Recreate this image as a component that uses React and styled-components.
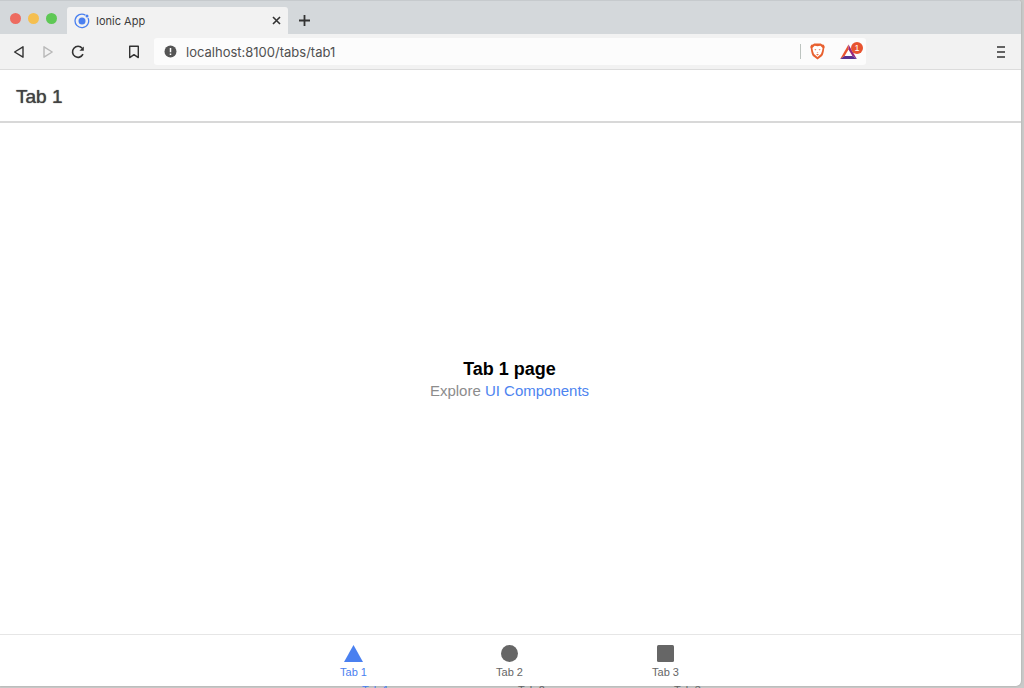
import React, { useState } from "react";
import styled, { createGlobalStyle } from "styled-components";

const GlobalStyle = createGlobalStyle`
    * {
        box-sizing: border-box;
    }
    html, body, #root {
        height: 100%;
        margin: 0;
    }
    body {
        background: #c9cac9;
        font-family: "Liberation Sans", Arial, sans-serif;
        overflow: hidden;
    }
    button {
        padding: 0;
        border: none;
        background: none;
        font: inherit;
        color: inherit;
    }
    svg {
        display: block;
    }
`;

/* browser window */
const DesktopStyled = styled.div`
    display: flex;
    flex-direction: column;
    height: 100%;
    padding-right: 3px;
`;

const WindowStyled = styled.div`
    flex: 1;
    min-height: 0;
    display: flex;
    flex-direction: column;
    overflow: hidden;
    background: #fff;
    border-radius: 0 4px 5px 0;
    box-shadow: 0 0 2px #999;
`;

/* the edge of the window behind, its tab labels just peek out */
const RearEdgeStyled = styled.div`
    display: flex;
    justify-content: center;
    height: 2px;
    padding-left: 42px;
    overflow: hidden;
    font-size: 11px;
    line-height: 8px;
    text-align: center;
    color: #666;
    span {
        width: 156px;
    }
    span:first-child {
        color: #4a80f0;
    }
`;

const TabStripStyled = styled.div`
    display: flex;
    align-items: flex-end;
    height: 34px;
    padding-left: 10px;
    background: #d4d8db;
    border-top: 1px solid #c6cacd;
    font-family: Inter, "Liberation Sans", sans-serif;
`;

const LightsStyled = styled.div`
    display: flex;
    align-self: center;
    gap: 7px;
    width: 57px;
    padding-top: 1px;
`;

const LightStyled = styled.button`
    width: 11px;
    height: 11px;
    border-radius: 50%;
    background: ${props => props.$color};
`;

const PageTabStyled = styled.div`
    display: flex;
    align-items: center;
    gap: 6px;
    width: 221px;
    height: 27px;
    padding: 0 7px;
    background: #f2f2f2;
    border-radius: 3px 3px 0 0;
    font-size: 11px;
    color: #3c3c3c;
    .name {
        flex: 1;
    }
`;

const NewTabStyled = styled.button`
    display: flex;
    align-items: center;
    height: 27px;
    margin-left: 10px;
    color: #333;
`;

const AddressRowStyled = styled.div`
    display: flex;
    align-items: center;
    height: 36px;
    padding: 0 14px 0 12px;
    background: #f2f2f2;
    border-bottom: 1px solid #dcdcdc;
    color: #333;
`;

const NavStyled = styled.div`
    display: flex;
    align-items: center;
    gap: 15px;
    .bookmark {
        margin-left: 27px;
    }
`;

const AddressStyled = styled.div`
    flex: 1;
    display: flex;
    align-items: center;
    max-width: 712px;
    height: 27px;
    margin-left: 14px;
    padding: 0 3px 0 10px;
    background: #fcfcfc;
    border-radius: 3px;
`;

const UrlStyled = styled.input`
    flex: 1;
    min-width: 0;
    margin-left: 9px;
    padding: 0;
    border: none;
    outline: none;
    background: none;
    font-family: Inter, "Liberation Sans", sans-serif;
    font-size: 13px;
    color: #505050;
`;

const ShieldsStyled = styled.div`
    display: flex;
    align-items: center;
    gap: 15px;
    height: 15px;
    padding-left: 9px;
    border-left: 1px solid #bdc4c0;
`;

const MenuStyled = styled.button`
    margin-left: auto;
`;

/* ionic page */
const HeaderStyled = styled.header`
    display: flex;
    align-items: center;
    height: 53px;
    padding: 2px 16px 0;
    border-bottom: 2px solid #d8d8d8;
    h1 {
        margin: 0;
        font-size: 19px;
        font-weight: 400;
        color: #424242;
        text-shadow: 0 0 1px #424242;
    }
`;

const ContentStyled = styled.main`
    flex: 1;
    display: flex;
    flex-direction: column;
    align-items: center;
    justify-content: center;
    padding-right: 2px;
    strong {
        font-size: 18px;
        line-height: 24px;
        color: #000;
    }
    p {
        margin: 0;
        font-size: 15px;
        line-height: 20px;
        color: #8c8c8c;
    }
    a {
        color: #4d84f0;
        text-decoration: none;
    }
`;

const TabBarStyled = styled.nav`
    display: flex;
    justify-content: center;
    height: 52px;
    padding-right: 2px;
    border-top: 1px solid #e6e6e6;
`;

const TabButtonStyled = styled.button`
    display: flex;
    flex-direction: column;
    align-items: center;
    width: 156px;
    padding-top: 9px;
    font-size: 11px;
    color: ${props => props.$active ? "#4a80f0" : "#666"};
    .label {
        margin-top: 2px;
        line-height: 14px;
    }
`;

const IonicLogo = () => <svg width="16" height="16" viewBox="0 0 16 16" fill="#4a80f0">
    <path d="M11.4 2.1A6.8 6.8 0 1 0 14 5" fill="none" stroke="#4a80f0" strokeWidth="1.3" />
    <circle cx="8" cy="8" r="3.5" />
    <circle cx="13" cy="3" r="1.5" />
</svg>;

const BackIcon = ({ color = "#333", flip }) => <svg width="14" height="14" viewBox="0 0 14 14"
    fill="none" stroke={color} strokeWidth="1.4" strokeLinejoin="round">
    <path d={flip ? "M3 1.8L11.2 7L3 12.2Z" : "M11 1.8L2.6 7L11 12.2Z"} />
</svg>;

const ReloadIcon = () => <svg width="16" height="16" viewBox="0 0 16 16" fill="none" stroke="#333" strokeWidth="1.6">
    <path d="M13 10.2A5.5 5.5 0 1 1 12.2 4.2" />
    <path d="M13.8 2.4V6.8H9.4Z" fill="#333" stroke="none" />
</svg>;

const BookmarkIcon = () => <svg width="12" height="14" viewBox="0 0 12 14" fill="none" stroke="#333" strokeWidth="1.4">
    <path d="M1.7 1.3H10.3V12.6L6 9.6L1.7 12.6Z" strokeLinejoin="round" />
</svg>;

const InfoIcon = () => <svg width="13" height="13" viewBox="0 0 13 13">
    <circle cx="6.5" cy="6.5" r="6" fill="#555" />
    <path d="M6.5 3V7.2M6.5 8.6V10" stroke="#fff" strokeWidth="1.5" />
</svg>;

const BraveIcon = () => <svg width="15" height="17" viewBox="0 0 15 17">
    <path d="M4.2 .6H10.8L12.2 1.6L13.8 1.8L14.8 4L14.2 5.4C13.8 9.6 13 12 11.8 13.3L7.5 16.6L3.2 13.3C2 12 1.2 9.6 .8 5.4L.2 4L1.2 1.8L2.8 1.6Z" fill="#e8602f" />
    <path d="M4.6 2.8L7.5 3.2L10.4 2.8L12.6 5L12.1 7.8L11 10.9L7.5 14L4 10.9L2.9 7.8L2.4 5Z" fill="#fff" />
    <path d="M4.2 5.9L6.3 6.5L5.8 7.4ZM10.8 5.9L8.7 6.5L9.2 7.4ZM6.5 9.4H8.5L7.5 10.2ZM6 11.6L7.5 11L9 11.6L7.5 12.6Z" fill="#e8602f" />
</svg>;

const RewardsStyled = styled.button`
    position: relative;
    width: 23px;
    height: 18px;
    .count {
        position: absolute;
        top: -1px;
        right: 0;
        width: 12px;
        height: 12px;
        border-radius: 50%;
        background: #e8532f;
        color: #fff;
        font-size: 9px;
        line-height: 12px;
        text-align: center;
    }
`;

const RewardsIcon = () => <svg width="18" height="18" viewBox="0 0 18 18">
    <path d="M8.5 1.5V6.5L4.6 13L.2 16Z" fill="#e8532f" />
    <path d="M8.5 1.5L16.8 16L12.4 13L8.5 6.5Z" fill="#96277f" />
    <path d="M.2 16L4.6 13H12.4L16.8 16Z" fill="#57308f" />
</svg>;

const shapes = {
    triangle: <path d="M9.5 1L19 18H0Z" />,
    circle: <circle cx="9.5" cy="9.5" r="8.5" />,
    square: <rect x="1" y="1" width="17" height="17" rx="1.5" />
};

const tabs = [
    { id: 1, text: "Tab 1", shape: "triangle" },
    { id: 2, text: "Tab 2", shape: "circle" },
    { id: 3, text: "Tab 3", shape: "square" }
];

const BrowserBar = function BrowserBar() {
    let [url, setUrl] = useState("localhost:8100/tabs/tab1");

    return <>
        <TabStripStyled>
            <LightsStyled>
                <LightStyled $color="#ed6b60" aria-label="Close window" />
                <LightStyled $color="#f5bf50" aria-label="Minimize window" />
                <LightStyled $color="#5ec855" aria-label="Zoom window" />
            </LightsStyled>
            <PageTabStyled>
                <IonicLogo />
                <span className="name">Ionic App</span>
                <button aria-label="Close tab">
                    <svg width="9" height="9" viewBox="0 0 9 9" stroke="#333" strokeWidth="1.6">
                        <path d="M1 1L8 8M8 1L1 8" />
                    </svg>
                </button>
            </PageTabStyled>
            <NewTabStyled aria-label="New tab">
                <svg width="13" height="13" viewBox="0 0 13 13" stroke="#333" strokeWidth="1.8">
                    <path d="M6.5 1V12M1 6.5H12" />
                </svg>
            </NewTabStyled>
        </TabStripStyled>
        <AddressRowStyled>
            <NavStyled>
                <button aria-label="Back"><BackIcon /></button>
                <button aria-label="Forward"><BackIcon flip color="#b8b8b8" /></button>
                <button aria-label="Reload"><ReloadIcon /></button>
                <button className="bookmark" aria-label="Bookmark"><BookmarkIcon /></button>
            </NavStyled>
            <AddressStyled>
                <InfoIcon />
                <UrlStyled type="text" aria-label="Address" value={url}
                    onChange={ev => setUrl(ev.target.value)} />
                <ShieldsStyled>
                    <button aria-label="Shields"><BraveIcon /></button>
                    <RewardsStyled aria-label="Rewards">
                        <RewardsIcon />
                        <span className="count">1</span>
                    </RewardsStyled>
                </ShieldsStyled>
            </AddressStyled>
            <MenuStyled aria-label="Menu">
                <svg width="12" height="14" viewBox="0 0 12 14" stroke="#333" strokeWidth="1.4">
                    <path d="M2 2H10M2 7H10M2 12H10" />
                </svg>
            </MenuStyled>
        </AddressRowStyled>
    </>;
};

const App = function App() {
    let [active, setActive] = useState(1);

    return <DesktopStyled>
        <GlobalStyle />
        <WindowStyled>
            <BrowserBar />
            <HeaderStyled>
                <h1>Tab {active}</h1>
            </HeaderStyled>
            <ContentStyled>
                <strong>Tab {active} page</strong>
                <p>Explore <a href="#components">UI Components</a></p>
            </ContentStyled>
            <TabBarStyled>
                {tabs.map(item => <TabButtonStyled key={item.id}
                    $active={item.id === active}
                    onClick={() => setActive(item.id)}>
                    <svg width="19" height="19" viewBox="0 0 19 19" fill="currentColor">
                        {shapes[item.shape]}
                    </svg>
                    <span className="label">{item.text}</span>
                </TabButtonStyled>)}
            </TabBarStyled>
        </WindowStyled>
        <RearEdgeStyled aria-hidden="true">
            {tabs.map(item => <span key={item.id}>{item.text}</span>)}
        </RearEdgeStyled>
    </DesktopStyled>;
};

export default App;
